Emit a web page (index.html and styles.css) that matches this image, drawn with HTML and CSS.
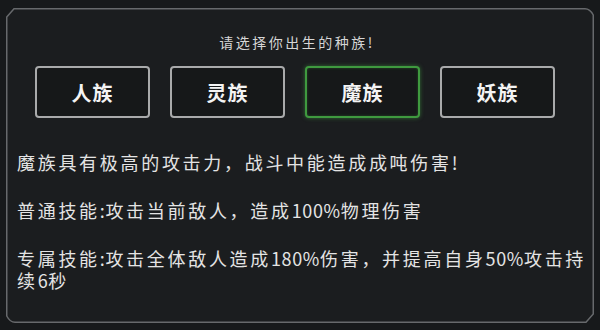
FILE: index.html
```html
<!DOCTYPE html>
<html lang="zh">
<head>
<meta charset="utf-8">
<link rel="stylesheet" href="styles.css">
</head>
<body>
<div class="panel">
  <svg class="frame" width="588" height="315" viewBox="0 0 588 315">
    <path d="M0.75 9 L8 0.75 L579 0.75 Q584 0.75 587.25 7 L587.25 306 L580 314.25 L9 314.25 Q4 314.25 0.75 308 Z" fill="#1b1d1f" stroke="#67696c" stroke-width="1.5"/>
  </svg>
  <div class="content">
    <div class="title">请选择你出生的种族!</div>
    <div class="races">
      <div class="race">人族</div>
      <div class="race">灵族</div>
      <div class="race selected">魔族</div>
      <div class="race">妖族</div>
    </div>
    <div class="desc">
      <p>魔族具有极高的攻击力，战斗中能造成成吨伤害<span class="num">!</span></p>
      <p>普通技能<span class="num">:</span>攻击当前敌人，造成<span class="num">100%</span>物理伤害</p>
      <p>专属技能<span class="num">:</span>攻击全体敌人造成<span class="num">180%</span>伤害，并提高自身<span class="num">50%</span>攻击持续<span class="num">6</span>秒</p>
    </div>
  </div>
</div>
</body>
</html>
```
FILE: styles.css
```css
html, body {
  margin: 0;
  padding: 0;
  background: #17191b;
  width: 600px;
  height: 330px;
  overflow: hidden;
}
body {
  font-family: "Noto Sans CJK SC", "Noto Sans", sans-serif;
  color: #e2e2e2;
}
.panel {
  position: relative;
  width: 588px;
  height: 315px;
  margin: 8px 6px 7px 6px;
}
.frame {
  position: absolute;
  left: 0;
  top: 0;
}
.content {
  position: relative;
  display: flex;
  flex-direction: column;
  padding-top: 24px;
}
.title {
  font-size: 14px;
  line-height: 20px;
  letter-spacing: 2.5px;
  text-align: center;
  color: #d6d6d6;
  padding-right: 6px;
}
.races {
  display: flex;
  gap: 20px;
  margin-top: 14px;
  padding-left: 29px;
}
.race {
  width: 115px;
  height: 52px;
  box-sizing: border-box;
  border: 2px solid #a9aaab;
  border-radius: 4px;
  display: flex;
  align-items: center;
  justify-content: center;
  font-size: 20px;
  font-weight: 700;
  letter-spacing: 1px;
  color: #f4f4f4;
  background: #161819;
}
.race.selected {
  border-color: #3f9a3f;
  box-shadow: 0 0 4px rgba(70, 170, 70, 0.55), inset 0 0 3px rgba(70, 170, 70, 0.35);
}
.desc {
  margin-top: 33px;
  padding-left: 11px;
  width: 570px;
}
.desc p {
  margin: 0 0 26px 0;
  font-size: 18px;
  line-height: 22px;
  letter-spacing: 2.7px;
  color: #e4e4e4;
}
.desc .num {
  letter-spacing: 0.6px;
}
```
